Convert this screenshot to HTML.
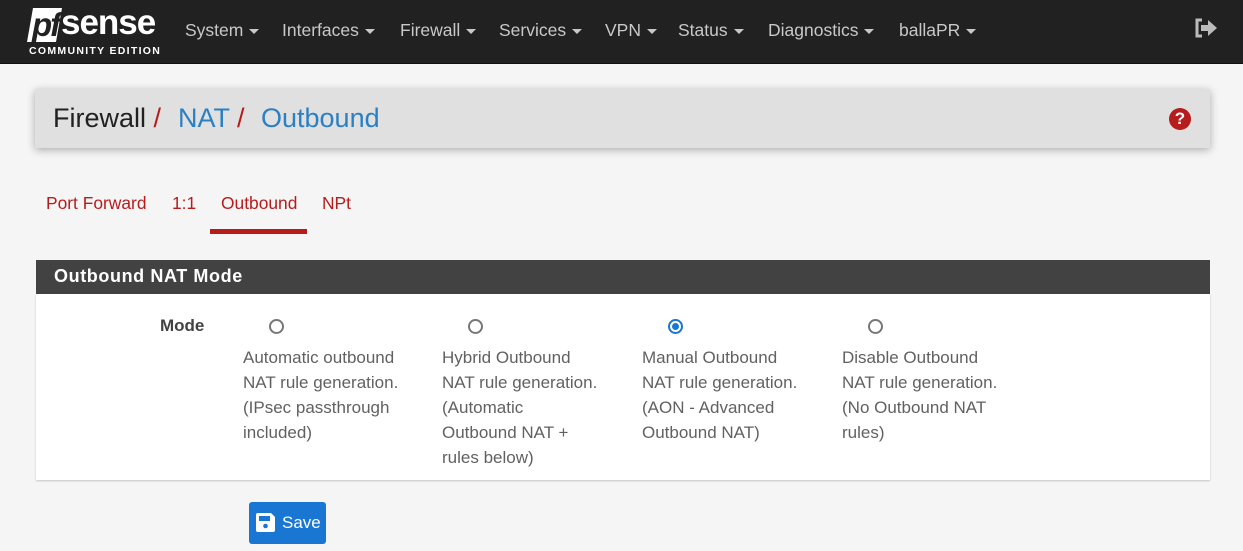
<!DOCTYPE html>
<html><head><style>
body{margin:0;width:1243px;height:551px;background:#f5f5f5;font-family:"Liberation Sans",sans-serif;overflow:hidden;position:relative}
.nav{position:absolute;left:0;top:0;width:1243px;height:63px;background:#212121;border-bottom:1px solid #111}
.nav .item{position:absolute;top:20px;color:#c8c8c8;font-size:17.5px}
.caret{display:inline-block;width:0;height:0;border-left:5px solid transparent;border-right:5px solid transparent;border-top:5px solid #c8c8c8;vertical-align:middle;margin-left:6px}
.bc{position:absolute;left:35px;top:89px;width:1175px;height:59px;background:#e0e0e0;box-shadow:0 2px 8px rgba(0,0,0,.3)}
.bc span{position:absolute;top:14px;font-size:27px}
.tab{position:absolute;top:193px;font-size:17.4px;color:#b71c1c}
.ph{position:absolute;left:36px;top:260px;width:1174px;height:34px;background:#424242;color:#fff;font-weight:bold;font-size:18px;letter-spacing:.6px}
.pb{position:absolute;left:36px;top:294px;width:1174px;height:186px;background:#fff;box-shadow:0 1px 2px rgba(0,0,0,.2)}
.radio{position:absolute;top:319px;width:11px;height:11px;border:2px solid #777;border-radius:50%}
.txt{position:absolute;top:345px;width:185px;font-size:17px;line-height:25px;color:#616161}
</style></head><body>
<div class="nav">
 <div style="position:absolute;left:30px;top:8px;width:29px;height:34px;background:#fff;transform:skewX(-10deg)"></div>
 <div style="position:absolute;left:32px;top:6px;font-size:33px;font-weight:bold;font-style:italic;color:#212121;letter-spacing:-2px">pf</div>
 <div style="position:absolute;left:61px;top:3px;font-size:35px;font-weight:bold;color:#fff;letter-spacing:-1px">sense</div>
 <div style="position:absolute;left:29px;top:45px;font-size:10.5px;font-weight:bold;color:#fff;letter-spacing:1.3px">COMMUNITY EDITION</div>
 <div class="item" style="left:185px">System<span class="caret"></span></div>
 <div class="item" style="left:282px">Interfaces<span class="caret"></span></div>
 <div class="item" style="left:400px">Firewall<span class="caret"></span></div>
 <div class="item" style="left:499px">Services<span class="caret"></span></div>
 <div class="item" style="left:605px">VPN<span class="caret"></span></div>
 <div class="item" style="left:678px">Status<span class="caret"></span></div>
 <div class="item" style="left:768px">Diagnostics<span class="caret"></span></div>
 <div class="item" style="left:899px">ballaPR<span class="caret"></span></div>
 <svg style="position:absolute;left:1194px;top:18px" width="24" height="20" viewBox="0 0 24 20"><path d="M8 2H3v16h5" fill="none" stroke="#bbb" stroke-width="3"/><path d="M7 7h7V2l9 8-9 8v-5H7z" fill="#bbb"/></svg>
</div>
<div class="bc">
 <span style="left:18px;color:#212121">Firewall <span style="position:static;color:#b71c1c">/</span></span>
 <span style="left:143px;color:#2b7fc3">NAT <span style="position:static;color:#b71c1c">/</span></span>
 <span style="left:226px;color:#2b7fc3">Outbound</span>
 <div style="position:absolute;left:1134px;top:19px;width:22px;height:22px;border-radius:50%;background:#b71c1c;color:#fff;font-weight:bold;font-size:17px;text-align:center;line-height:22px">?</div>
</div>
<div class="tab" style="left:46px">Port Forward</div>
<div class="tab" style="left:172px">1:1</div>
<div class="tab" style="left:221px">Outbound</div>
<div class="tab" style="left:322px">NPt</div>
<div style="position:absolute;left:210px;top:229px;width:97px;height:5px;background:#b71c1c"></div>
<div class="ph"><span style="position:absolute;left:18px;top:6px">Outbound NAT Mode</span></div>
<div class="pb"></div>
<div style="position:absolute;left:160px;top:316px;font-size:17px;font-weight:bold;color:#424242">Mode</div>
<div class="radio" style="left:269px"></div>
<div class="radio" style="left:468px"></div>
<div class="radio" style="left:668px;border-color:#1976d2"><div style="position:absolute;left:2px;top:2px;width:7px;height:7px;border-radius:50%;background:#1976d2"></div></div>
<div class="radio" style="left:868px"></div>
<div class="txt" style="left:243px">Automatic outbound NAT rule generation. (IPsec passthrough included)</div>
<div class="txt" style="left:442px;width:158px">Hybrid Outbound NAT rule generation. (Automatic<br>Outbound NAT +<br>rules below)</div>
<div class="txt" style="left:642px;width:170px">Manual Outbound NAT rule generation. (AON - Advanced Outbound NAT)</div>
<div class="txt" style="left:842px;width:170px">Disable Outbound NAT rule generation. (No Outbound NAT rules)</div>
<div style="position:absolute;left:249px;top:502px;width:77px;height:42px;background:#1976d2;border-radius:3px;color:#fff;font-size:17px">
 <svg style="position:absolute;left:7px;top:11px" width="19" height="19" viewBox="0 0 19 19"><path d="M2 0h13l4 4v13a2 2 0 0 1-2 2H2a2 2 0 0 1-2-2V2a2 2 0 0 1 2-2z" fill="#fff"/><rect x="3" y="3" width="11" height="5" fill="#1976d2"/><circle cx="9.5" cy="13" r="2.3" fill="#1976d2"/></svg>
 <span style="position:absolute;left:33px;top:11px">Save</span>
</div>
</body></html>
